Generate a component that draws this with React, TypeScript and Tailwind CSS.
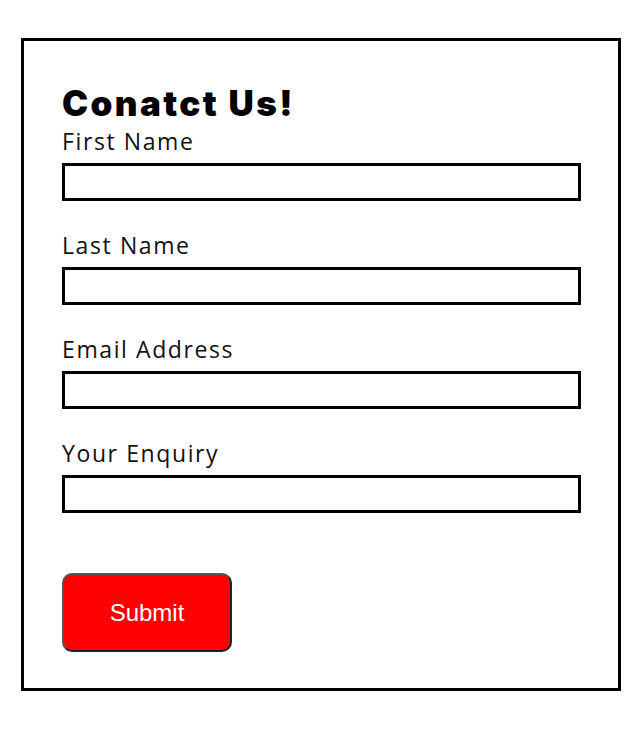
import { useState } from "react";

const fields = [
  { name: "firstName", label: "First Name" },
  { name: "lastName", label: "Last Name" },
  { name: "email", label: "Email Address" },
  { name: "enquiry", label: "Your Enquiry" },
];

export default function App() {
  const [values, setValues] = useState<Record<string, string>>({});

  return (
    <div className="min-h-[733px] bg-white pt-[38px] pl-[21px]">
      <form
        onSubmit={(e) => e.preventDefault()}
        className="w-[600px] h-[653px] border-[3px] border-black px-[38px] pt-[42px]"
      >
        <h1 className="font-['Inter',sans-serif] font-black text-[35px] leading-[41px] tracking-[2.4px] text-black">
          Conatct Us!
        </h1>
        <div className="mt-[2px] flex flex-col gap-[29px] font-['Open_Sans',sans-serif]">
          {fields.map((f) => (
            <label key={f.name} className="block">
              <span className="block text-[23px] leading-[30px] tracking-[1.6px] text-[#111]">
                {f.label}
              </span>
              <input
                name={f.name}
                value={values[f.name] ?? ""}
                onChange={(e) => setValues({ ...values, [f.name]: e.target.value })}
                className="mt-[7px] block w-[519px] h-[38px] border-[3px] border-black bg-white outline-none"
              />
            </label>
          ))}
        </div>
        <button
          type="submit"
          className="mt-[60px] w-[170px] h-[79px] rounded-[10px] border-2 border-t-[#555] border-l-[#555] border-r-[#222] border-b-[#222] bg-[#ff0000] font-['Liberation_Sans',Arial,sans-serif] text-[24px] text-white"
        >
          Submit
        </button>
      </form>
    </div>
  );
}
